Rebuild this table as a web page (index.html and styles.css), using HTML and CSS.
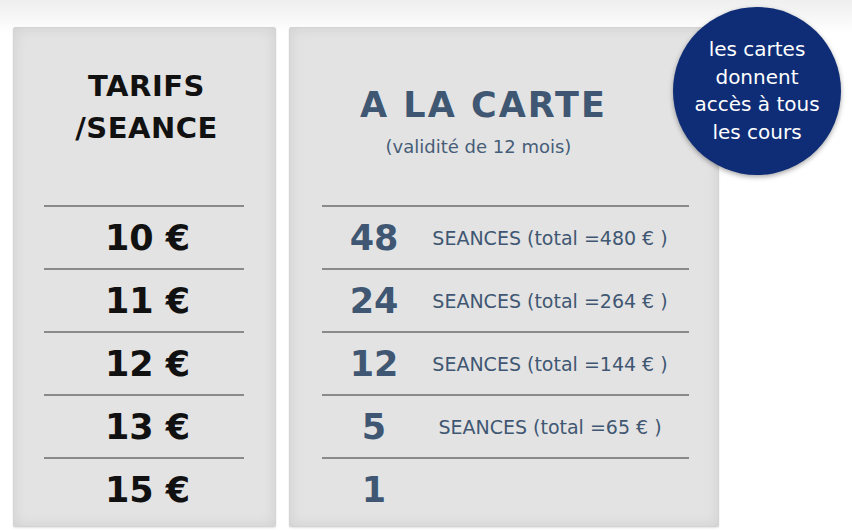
FILE: index.html
```html
<!DOCTYPE html>
<html lang="fr">
<head>
<meta charset="utf-8">
<title>Tarifs</title>
<link rel="stylesheet" href="styles.css">
</head>
<body>
<div class="page">
  <section class="panel panel-left">
    <header class="left-head">
      <h1 class="left-title">TARIFS<br>/SEANCE</h1>
    </header>
    <div class="rows">
      <div class="row price">10 €</div>
      <div class="row price">11 €</div>
      <div class="row price">12 €</div>
      <div class="row price">13 €</div>
      <div class="row price last">15 €</div>
    </div>
  </section>
  <section class="panel panel-right">
    <header class="right-head">
      <h2 class="right-title">A LA CARTE</h2>
      <p class="validity">(validité de 12 mois)</p>
    </header>
    <div class="rows">
      <div class="row card"><span class="num">48</span><span class="desc">SEANCES (total =480 € )</span></div>
      <div class="row card"><span class="num">24</span><span class="desc">SEANCES (total =264 € )</span></div>
      <div class="row card"><span class="num">12</span><span class="desc">SEANCES (total =144 € )</span></div>
      <div class="row card"><span class="num">5</span><span class="desc">SEANCES (total =65 € )</span></div>
      <div class="row card last"><span class="num">1</span><span class="desc"></span></div>
    </div>
  </section>
  <div class="badge">les cartes<br>donnent<br>accès à tous<br>les cours</div>
</div>
</body>
</html>
```

FILE: styles.css
```css
html, body {
  margin: 0;
  padding: 0;
}
body {
  width: 852px;
  height: 531px;
  overflow: hidden;
  background: linear-gradient(to bottom, #efefef 0px, #f7f7f7 18px, #ffffff 34px);
  font-family: "Comic Sans MS", "DejaVu Sans", sans-serif;
}
.page {
  position: relative;
  display: flex;
  gap: 13px;
  padding: 27px 0 0 13px;
  height: 504px;
  box-sizing: border-box;
}
.panel {
  box-sizing: border-box;
  height: 500px;
  background: #e3e3e3;
  border: 1px solid #d4d4d4;
  border-radius: 2px;
  box-shadow: inset 0 0 14px rgba(0,0,0,0.09), 0 1px 2px rgba(0,0,0,0.12);
  display: flex;
  flex-direction: column;
}
.panel-left {
  width: 263px;
  padding: 0 31px 0 30px;
}
.panel-right {
  width: 430px;
  padding: 0 29px 0 32px;
}
.left-head, .right-head {
  height: 177px;
  box-sizing: border-box;
}
.left-title {
  margin: 0;
  padding: 37px 0 0 5px;
  text-align: center;
  font-size: 29px;
  line-height: 42px;
  font-weight: bold;
  color: #111;
  letter-spacing: 0.5px;
}
.right-title {
  margin: 0;
  padding: 55px 44px 0 0;
  text-align: center;
  font-size: 35px;
  line-height: 44px;
  font-weight: bold;
  color: #3f5772;
  letter-spacing: 2px;
}
.validity {
  margin: 8px 0 0;
  padding-right: 54px;
  text-align: center;
  font-size: 18px;
  line-height: 24px;
  color: #465d78;
}
.rows {
  display: flex;
  flex-direction: column;
}
.row {
  border-top: 2px solid #8a8a8a;
  height: 61px;
  display: flex;
  align-items: center;
}
.price {
  justify-content: center;
  padding-left: 7px;
  font-size: 35px;
  font-weight: bold;
  color: #111;
}
.card {
  display: grid;
  grid-template-columns: 104px 248px;
  align-items: center;
}
.num {
  text-align: center;
  font-size: 35px;
  font-weight: bold;
  color: #3f5772;
}
.desc {
  text-align: center;
  font-size: 19px;
  color: #3f5772;
}
.badge {
  position: absolute;
  left: 673px;
  top: 7px;
  width: 168px;
  height: 168px;
  border-radius: 50%;
  background: #0e2d76;
  box-shadow: 0 2px 5px rgba(0,0,0,0.35);
  color: #fff;
  font-family: "DejaVu Sans", Verdana, sans-serif;
  font-size: 20px;
  line-height: 27.5px;
  text-align: center;
  display: flex;
  align-items: center;
  justify-content: center;
}
```
